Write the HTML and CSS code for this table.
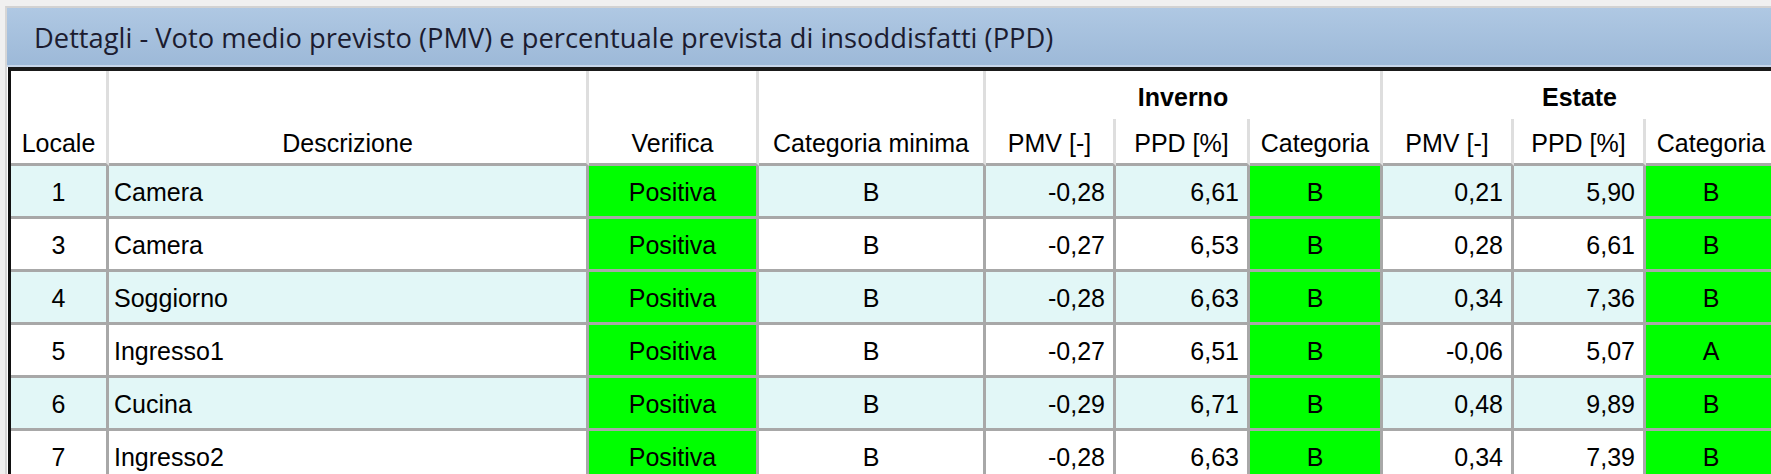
FILE: index.html
```html
<!DOCTYPE html>
<html lang="it">
<head>
<meta charset="utf-8">
<title>Dettagli PMV PPD</title>
<link rel="stylesheet" href="styles.css">
</head>
<body>
<div class="panel">
  <div class="titlebar">Dettagli - Voto medio previsto (PMV) e percentuale prevista di insoddisfatti (PPD)</div>
  <div class="grid-wrap">
    <table class="grid">
      <colgroup>
        <col class="c-loc"><col class="c-desc"><col class="c-ver"><col class="c-catmin">
        <col class="c-pmv1"><col class="c-ppd1"><col class="c-cat1">
        <col class="c-pmv2"><col class="c-ppd2"><col class="c-cat2">
      </colgroup>
      <thead>
        <tr class="h-group">
          <th rowspan="2" class="h-span">Locale</th>
          <th rowspan="2" class="h-span">Descrizione</th>
          <th rowspan="2" class="h-span">Verifica</th>
          <th rowspan="2" class="h-span">Categoria minima</th>
          <th colspan="3" class="h-title">Inverno</th>
          <th colspan="3" class="h-title">Estate</th>
        </tr>
        <tr class="h-sub">
          <th>PMV [-]</th><th>PPD [%]</th><th>Categoria</th>
          <th>PMV [-]</th><th>PPD [%]</th><th>Categoria</th>
        </tr>
      </thead>
      <tbody>
        <tr class="alt">
          <td class="ctr">1</td><td class="txt">Camera</td><td class="ok">Positiva</td><td class="ctr">B</td>
          <td class="num">-0,28</td><td class="num">6,61</td><td class="ok">B</td>
          <td class="num">0,21</td><td class="num">5,90</td><td class="ok">B</td>
        </tr>
        <tr>
          <td class="ctr">3</td><td class="txt">Camera</td><td class="ok">Positiva</td><td class="ctr">B</td>
          <td class="num">-0,27</td><td class="num">6,53</td><td class="ok">B</td>
          <td class="num">0,28</td><td class="num">6,61</td><td class="ok">B</td>
        </tr>
        <tr class="alt">
          <td class="ctr">4</td><td class="txt">Soggiorno</td><td class="ok">Positiva</td><td class="ctr">B</td>
          <td class="num">-0,28</td><td class="num">6,63</td><td class="ok">B</td>
          <td class="num">0,34</td><td class="num">7,36</td><td class="ok">B</td>
        </tr>
        <tr>
          <td class="ctr">5</td><td class="txt">Ingresso1</td><td class="ok">Positiva</td><td class="ctr">B</td>
          <td class="num">-0,27</td><td class="num">6,51</td><td class="ok">B</td>
          <td class="num">-0,06</td><td class="num">5,07</td><td class="ok">A</td>
        </tr>
        <tr class="alt">
          <td class="ctr">6</td><td class="txt">Cucina</td><td class="ok">Positiva</td><td class="ctr">B</td>
          <td class="num">-0,29</td><td class="num">6,71</td><td class="ok">B</td>
          <td class="num">0,48</td><td class="num">9,89</td><td class="ok">B</td>
        </tr>
        <tr>
          <td class="ctr">7</td><td class="txt">Ingresso2</td><td class="ok">Positiva</td><td class="ctr">B</td>
          <td class="num">-0,28</td><td class="num">6,63</td><td class="ok">B</td>
          <td class="num">0,34</td><td class="num">7,39</td><td class="ok">B</td>
        </tr>
      </tbody>
    </table>
  </div>
</div>
</body>
</html>
```
FILE: styles.css
```css
html, body {
  margin: 0;
  padding: 0;
  overflow: hidden;
  background: #f0f0f0;
}
body {
  width: 1771px;
  height: 474px;
}
.panel {
  margin: 6px 0 0 5px;
  border-top: 2px solid #d2d2d2;
  border-left: 2px solid #d6d6d6;
  background: #ffffff;
  width: 1820px;
}
.titlebar {
  height: 59px;
  box-sizing: border-box;
  padding-left: 27px;
  line-height: 60px;
  font-family: "Open Sans", "Noto Sans", sans-serif;
  font-size: 27.3px;
  color: #1c1c30;
  background: linear-gradient(#afc8e3, #9db9d8);
  border-bottom: 2px solid #c6d6ea;
  white-space: nowrap;
}
.grid-wrap {
  margin-left: 1px;
  border-left: 3px solid #111111;
  border-top: 4px solid #1a1a1a;
}
.grid {
  border-collapse: separate;
  border-spacing: 0;
  table-layout: fixed;
  width: 1768px;
  font-family: "Liberation Sans", Arial, sans-serif;
  font-size: 25px;
  color: #000000;
}
.c-loc { width: 98px; }
.c-desc { width: 480px; }
.c-ver { width: 170px; }
.c-catmin { width: 227px; }
.c-pmv1 { width: 130px; }
.c-ppd1 { width: 134px; }
.c-cat1 { width: 133px; }
.c-pmv2 { width: 131px; }
.c-ppd2 { width: 132px; }
.c-cat2 { width: 133px; }

th {
  font-weight: normal;
  background: #ffffff;
  padding: 0;
  border-right: 3px solid #dedede;
  white-space: nowrap;
  text-align: center;
}
.h-group th.h-title {
  height: 48px;
  font-weight: bold;
  vertical-align: middle;
  padding-top: 4px;
  box-sizing: border-box;
}
.h-span {
  vertical-align: bottom;
  line-height: 40px;
  border-bottom: 3px solid #a8a8a8;
}
.h-sub th {
  height: 40px;
  padding-top: 4px;
  line-height: 40px;
  border-bottom: 3px solid #a8a8a8;
  vertical-align: middle;
}
td {
  height: 48px;
  padding: 2px 0 0 0;
  border-right: 3px solid #a8a8a8;
  border-bottom: 3px solid #a8a8a8;
  background: #ffffff;
  white-space: nowrap;
  vertical-align: middle;
}
tr.alt td {
  background: #e2f7f7;
}
td.ctr {
  text-align: center;
}
td.txt {
  text-align: left;
  padding-left: 5px;
}
td.num {
  text-align: right;
  padding-right: 8px;
}
td.ok, tr.alt td.ok {
  text-align: center;
  background: #00ff00;
}
```
